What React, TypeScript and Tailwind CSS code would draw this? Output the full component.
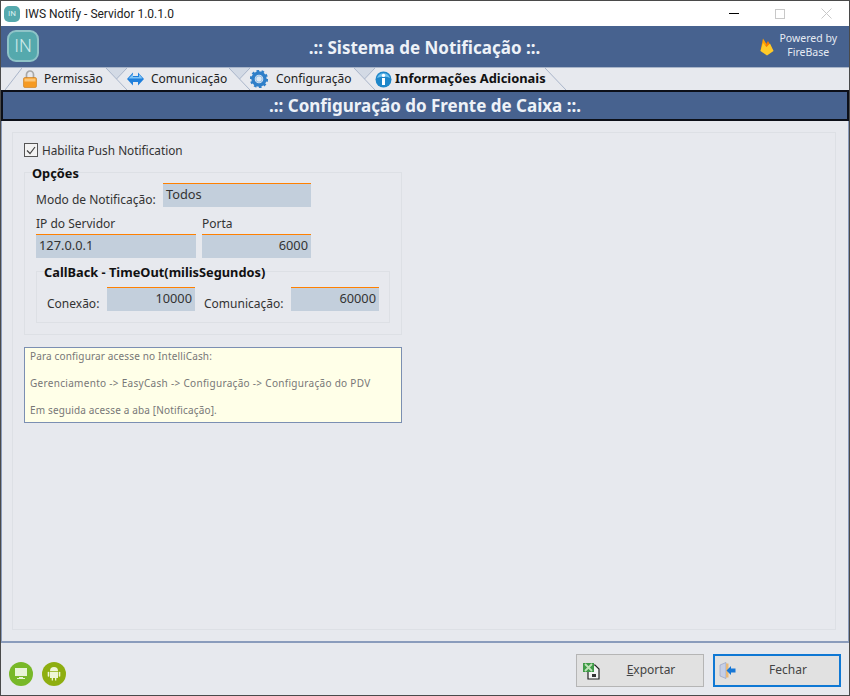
const UI_FONT = "font-['Noto_Sans',sans-serif]";

const LockIcon = () => (
  <svg width="14" height="18" viewBox="0 0 14 18" className="shrink-0">
    <path d="M3.500 8V4.500a3.500 3.500 0 0 1 7 0V8" fill="none" stroke="#a8a8a8" strokeWidth="1.700" />
    <rect x="0.500" y="7.500" width="13" height="10" rx="1.500" fill="#f59a23" stroke="#c97a17" strokeWidth="0.600" />
    <rect x="1.500" y="8.500" width="11" height="3" fill="#fbc679" />
  </svg>
);

const ArrowsIcon = () => (
  <svg width="17" height="14" viewBox="0 0 17 14" className="shrink-0">
    <path d="M0 7l6-6.500V4h5V0.500L17 7l-6 6.500V10H6v3.500z" fill="#1f7fdc" />
    <path d="M1.500 6.500L6 2v3h6V2l3.500 4.500z" fill="#7fc4f6" />
  </svg>
);

const GearIcon = () => (
  <svg width="18" height="18" viewBox="0 0 18 18" className="shrink-0">
    <circle cx="9" cy="9" r="6" fill="none" stroke="#2f7fc9" strokeWidth="3.400" />
    <circle cx="9" cy="9" r="8" fill="none" stroke="#2f7fc9" strokeWidth="2.200" strokeDasharray="2.600 2.400" />
    <circle cx="9" cy="9" r="3.200" fill="#dfe9f4" stroke="#8dbde8" strokeWidth="1" />
  </svg>
);

const InfoIcon = () => (
  <svg width="17" height="17" viewBox="0 0 17 17" className="shrink-0">
    <circle cx="8.500" cy="8.500" r="8" fill="#1d86c9" />
    <path d="M2 7a6.800 6.800 0 0 1 13 0c-3-1.600-9-1.600-13 0z" fill="#6fc0ee" />
    <rect x="7" y="7" width="3" height="7" fill="#fff" />
    <circle cx="8.500" cy="4.400" r="1.700" fill="#fff" />
  </svg>
);

const FirebaseIcon = () => (
  <svg width="14" height="18" viewBox="0 0 14 18" className="shrink-0">
    <path d="M0.500 13L3 0.500l4 6.500z" fill="#ffa000" />
    <path d="M5 8l3-5 5.500 10z" fill="#f57c00" />
    <path d="M0.500 13L3 5l3.500 4L10 5.500 13.500 13 7 17.500z" fill="#ffca28" />
  </svg>
);

const ExcelIcon = () => (
  <svg width="17" height="18" viewBox="0 0 17 18">
    <path d="M5 3h7l4 4v10H5z" fill="#f4f4f4" stroke="#222" strokeWidth="1.200" />
    <path d="M0 1h11v9H0z" fill="#3f9a47" />
    <path d="M2 2l7 7M9 2L2 9" stroke="#bfe3b8" strokeWidth="1.800" />
    <rect x="9" y="12" width="4" height="3" fill="#333" />
  </svg>
);

const DoorIcon = () => (
  <svg width="17" height="17" viewBox="0 0 17 17">
    <path d="M1 3l6-2.500v16L1 14z" fill="#c6cfe6" stroke="#8f9ac0" strokeWidth="0.600" />
    <path d="M7 1.500h2.500v14H7z" fill="#e8b978" />
    <path d="M7.500 8.500l4.500-4.500v2.500h4.500v4H12v2.500z" fill="#1677d6" />
  </svg>
);

const AndroidIcon = () => (
  <svg width="14" height="15" viewBox="0 0 14 15">
    <path d="M3 5a4 4 0 0 1 8 0z" fill="#eef6d8" />
    <path d="M3 5.700h8v6.300H9.300v2.500H8V12H6v2.500H4.700V12H3z" fill="#eef6d8" />
    <rect x="0.700" y="5.700" width="1.600" height="5" rx="0.800" fill="#eef6d8" />
    <rect x="11.700" y="5.700" width="1.600" height="5" rx="0.800" fill="#eef6d8" />
  </svg>
);

const Field = ({ value, right, className }: { value: string; right?: boolean; className: string }) => (
  <div
    className={`flex h-6 shrink-0 items-center border-t border-[#ff8000] bg-[#c3cfdc] px-[3px] pb-[3px] text-[12.800px] text-[#333] ${
      right ? 'justify-end' : ''
    } ${className}`}
  >
    {value}
  </div>
);

const Slant = ({ last }: { last?: boolean }) => (
  <svg width="21" height="22" viewBox="0 0 21 22" className="shrink-0">
    {!last && <path d="M0 0H21L10.500 11z" fill="#d3dae5" />}
    <path d="M0 0L21 22" stroke="#a9b5c9" fill="none" />
    {!last && <path d="M21 0L10.500 11" stroke="#a9b5c9" fill="none" />}
  </svg>
);

const tabs = [
  { label: 'Permissão', icon: <LockIcon />, width: 'w-[84px]', gap: 'gap-[7px]' },
  { label: 'Comunicação', icon: <ArrowsIcon />, width: 'w-[102px]', gap: 'gap-[7px]' },
  { label: 'Configuração', icon: <GearIcon />, width: 'w-[104px]', gap: 'gap-2' },
];

export default function App() {
  return (
    <div className={`flex h-[696px] w-[850px] flex-col overflow-hidden border border-[#4a4a4a] bg-[#e7e9ee] ${UI_FONT}`}>
      {/* Title bar */}
      <div className="flex h-[25px] shrink-0 items-center bg-white pl-[3px]">
        <div className="flex h-4 w-4 items-center justify-center rounded-[5px] bg-[#55a9ad] font-['Roboto',sans-serif] text-[8px] text-[#d7eeee]">IN</div>
        <span className="ml-[5px] font-['Roboto',sans-serif] text-[12px] text-[#222]">IWS Notify - Servidor 1.0.1.0</span>
        <div className="ml-auto mr-[17px] flex items-center gap-9">
          <div className="h-px w-2.5 bg-black" />
          <div className="h-2.5 w-2.5 border border-[#c8c8c8]" />
          <svg width="11" height="11" viewBox="0 0 11 11"><path d="M0.500 0.500l10 10M10.500 0.500l-10 10" stroke="#c8c8c8" /></svg>
        </div>
      </div>

      {/* Header */}
      <div className="grid h-[41px] shrink-0 grid-cols-[1fr_auto_1fr] items-center bg-[#47628f] pl-[6px] pr-3">
        <div className="-mt-[2px] flex h-8 w-8 items-center justify-center rounded-[9px] border-2 border-[#8fc4c8] bg-[#55a9ad] font-['Roboto',sans-serif] text-[18px] font-light text-[#cfe9ea]">IN</div>
        <div className="pl-[5px] pt-[2px] text-center text-[17px] font-bold text-[#eef2f8]">.:: Sistema de Notificação ::.</div>
        <div className="flex items-center justify-end">
          <FirebaseIcon />
          <div className="-mt-[3px] ml-[5px] text-center text-[10.500px] leading-[14px] text-[#e6ebf3]">
            Powered by
            <br />
            FireBase
          </div>
        </div>
      </div>

      {/* Tabs */}
      <div className="flex h-[23px] shrink-0 border-t border-[#a9b5c9] pl-1 text-[12px] text-[#222]">
        <svg width="17" height="22" viewBox="0 0 17 22" className="shrink-0">
          <path d="M0 22L17 0" stroke="#a9b5c9" fill="none" />
        </svg>
        {tabs.map((tab) => (
          <div key={tab.label} className="flex shrink-0 items-center">
            <div className={`flex h-full items-center ${tab.gap} ${tab.width} ${tab.label === 'Permissão' ? 'pl-[1px]' : ''}`}>
              {tab.icon}
              <span>{tab.label}</span>
            </div>
            <Slant />
          </div>
        ))}
        <div className="flex h-full w-[170px] shrink-0 items-center gap-[3px] text-[12.900px] font-bold text-[#111]">
          <InfoIcon />
          <span className="whitespace-nowrap">Informações Adicionais</span>
        </div>
        <Slant last />
      </div>

      {/* Section bar */}
      <div className="flex h-[31px] shrink-0 items-center justify-center border-2 border-[#0c0f18] bg-[#47628f] text-[17px] font-bold text-[#eef2f8]">
        .:: Configuração do Frente de Caixa ::.
      </div>

      {/* Tab page */}
      <div className="flex h-[522px] shrink-0 flex-col border-b-2 border-x border-[#8a9cbc] pb-[11px] pl-[10px] pr-3 pt-[11px]">
        <div className="flex flex-1 flex-col items-start border border-[#dde0e5] px-[11px] pt-2 text-[12px] leading-[18px] text-[#333]">
          <div className="flex items-center gap-1">
            <div className="flex h-[14px] w-[14px] items-center justify-center border border-[#555] bg-[#f3f3f3]">
              <svg width="10" height="9" viewBox="0 0 10 9"><path d="M1 4.500l3 3 5-6.500" fill="none" stroke="#444" strokeWidth="1.200" /></svg>
            </div>
            <span className="text-[11.800px]">Habilita Push Notification</span>
          </div>

          {/* Opções */}
          <div className="mt-[13px] h-[163px] w-[378px] border border-[#dde0e5] px-[11px]">
            <div className="-mt-[9px] ml-[-4px] w-fit text-[12.800px] font-bold leading-[19px] text-[#111]">Opções</div>
            <div className="flex h-6 items-end">
              <span className="w-[127px] shrink-0 leading-[14px]">Modo de Notificação:</span>
              <Field value="Todos" className="w-[148px]" />
            </div>
            <div className="mt-2 flex gap-[6px]">
              <span className="w-40">IP do Servidor</span>
              <span>Porta</span>
            </div>
            <div className="mt-px flex gap-[6px]">
              <Field value="127.0.0.1" className="w-40" />
              <Field value="6000" right className="w-[109px]" />
            </div>

            {/* CallBack */}
            <div className="mt-[13px] h-[52px] w-[354px] border border-[#dde0e5] px-[7px]">
              <div className="-mt-[9px] w-fit text-[12.800px] font-bold leading-[19px] text-[#111]">CallBack - TimeOut(milisSegundos)</div>
              <div className="mt-[5px] flex h-6 items-end">
                <span className="ml-[3px] w-[60px] shrink-0 leading-[14px]">Conexão:</span>
                <Field value="10000" right className="w-[88px]" />
                <span className="ml-[9px] w-[87px] shrink-0 leading-[14px]">Comunicação:</span>
                <Field value="60000" right className="w-[88px]" />
              </div>
            </div>
          </div>

          {/* Note */}
          <div className="mt-3 flex h-[76px] w-[378px] flex-col justify-between border border-[#7b8fb2] bg-[#ffffe8] pb-[5px] pl-[5px] pt-px text-[10px] leading-[14px] text-[#777]">
            <span className="tracking-[0.15px]">Para configurar acesse no IntelliCash:</span>
            <span className="tracking-[0.3px]">Gerenciamento -&gt; EasyCash -&gt; Configuração -&gt; Configuração do PDV</span>
            <span className="tracking-[0.15px]">Em seguida acesse a aba [Notificação].</span>
          </div>
        </div>
      </div>

      {/* Footer */}
      <div className="flex flex-1 items-center pl-2 pr-2 pt-[2px]">
        <div className="mt-[7px] flex items-center gap-[9px]">
          <div className="flex h-6 w-6 items-center justify-center rounded-full bg-[#78b828]">
            <svg width="14" height="13" viewBox="0 0 14 13"><path d="M1 1h12v8H1z" fill="#e8f4d8" /><path d="M5 10h4v1h2v1H3v-1h2z" fill="#e8f4d8" /></svg>
          </div>
          <div className="flex h-6 w-6 items-center justify-center rounded-full bg-[#8eae10]">
            <AndroidIcon />
          </div>
        </div>
        <div className="ml-auto flex gap-[9px] text-[12px] text-[#444]">
          <div className="relative flex h-[33px] w-[128px] items-center justify-center border border-[#b5b5b5] bg-[#e1e1e1] pl-[22px]">
            <span className="absolute left-[6px] top-[7px]"><ExcelIcon /></span>
            <span><span className="underline">E</span>xportar</span>
          </div>
          <div className="relative flex h-[33px] w-[128px] items-center justify-center border-2 border-[#0f78d4] bg-[#e1e1e1] pl-[22px]">
            <span className="absolute left-[4px] top-[6px]"><DoorIcon /></span>
            <span>Fechar</span>
          </div>
        </div>
      </div>
    </div>
  );
}
